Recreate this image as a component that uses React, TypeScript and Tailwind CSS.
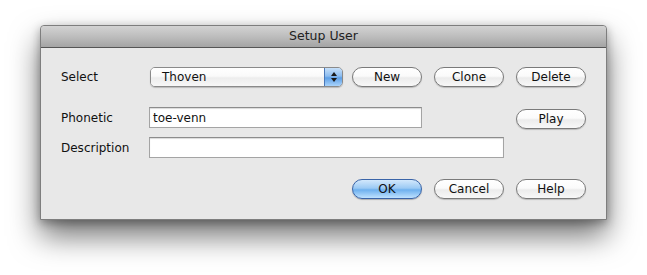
import React from "react";

const font = { fontFamily: '"DejaVu Sans", "Liberation Sans", sans-serif' };

function AquaButton({ label, primary = false }: { label: string; primary?: boolean }) {
  return (
    <button
      className={
        primary
          ? "h-[20px] w-[70px] rounded-full border border-[#3a64a8] bg-[linear-gradient(to_bottom,#d2e8fc_0%,#9ccaf4_45%,#6eb0ee_55%,#bfe2ff_100%)] text-[12px] leading-none text-[#111] shadow-[0_1px_1px_rgba(0,0,0,0.25)]"
          : "h-[20px] w-[70px] rounded-full border border-[#7a7a7a] bg-[linear-gradient(to_bottom,#ffffff_0%,#fbfbfb_45%,#ececec_55%,#f8f8f8_100%)] text-[12px] leading-none text-[#111] shadow-[0_1px_1px_rgba(0,0,0,0.2)]"
      }
    >
      {label}
    </button>
  );
}

function PopUp({ value }: { value: string }) {
  return (
    <div className="flex h-[20px] w-[193px] overflow-hidden rounded-[5px] border border-[#8a8a8a] shadow-[0_1px_1px_rgba(0,0,0,0.2)]">
      <div className="flex flex-1 items-center bg-[linear-gradient(to_bottom,#ffffff_0%,#fafafa_45%,#ededed_55%,#f7f7f7_100%)] pl-[11px] text-[12px] text-[#111]">
        {value}
      </div>
      <div className="flex w-[18px] flex-col items-center justify-center gap-[2px] border-l border-[#4a78b8] bg-[linear-gradient(to_bottom,#c6e0fa_0%,#8cbcef_45%,#5d9fe6_55%,#a9d3fb_100%)]">
        <svg width="6" height="4" viewBox="0 0 6 4">
          <path d="M3 0 L6 4 L0 4 Z" fill="#1a1a1a" />
        </svg>
        <svg width="6" height="4" viewBox="0 0 6 4">
          <path d="M0 0 L6 0 L3 4 Z" fill="#1a1a1a" />
        </svg>
      </div>
    </div>
  );
}

function TextField({ value, width }: { value?: string; width: string }) {
  return (
    <div
      className={`flex h-[21px] ${width} items-center border border-[#a4a4a4] border-t-[#8c8c8c] bg-white pl-[3px] text-[12px] text-[#111] shadow-[inset_0_1px_1px_rgba(0,0,0,0.15)]`}
    >
      {value}
    </div>
  );
}

export default function App() {
  return (
    <div className="h-[275px] w-[647px] overflow-hidden bg-white pt-[25px] pl-[40px]" style={font}>
      <div className="w-[567px] rounded-t-[4px] border border-[#7e7e7e] bg-[#e8e8e8] shadow-[0_16px_30px_rgba(0,0,0,0.55),0_3px_10px_rgba(0,0,0,0.3)]">
        <div className="flex h-[22px] items-center justify-center rounded-t-[4px] border-b border-[#555] bg-[linear-gradient(to_bottom,#d3d3d3_0%,#bdbdbd_50%,#a4a4a4_100%)] text-[12.5px] text-[#222]">
          Setup User
        </div>

        <div className="flex flex-col pt-[19px] pb-[20px] pl-[20px] text-[12px] text-[#111]">
          <div className="flex h-[20px] items-center">
            <span className="w-[89px]">Select</span>
            <PopUp value="Thoven" />
            <div className="ml-[9px] flex gap-[12px]">
              <AquaButton label="New" />
              <AquaButton label="Clone" />
              <AquaButton label="Delete" />
            </div>
          </div>

          <div className="mt-[20px] flex h-[21px] items-center">
            <span className="w-[88px]">Phonetic</span>
            <TextField value="toe-venn" width="w-[273px]" />
            <div className="ml-[94px] mt-[2px]">
              <AquaButton label="Play" />
            </div>
          </div>

          <div className="mt-[9px] flex h-[21px] items-center">
            <span className="w-[88px]">Description</span>
            <TextField width="w-[355px]" />
          </div>

          <div className="mt-[21px] flex h-[20px] justify-end gap-[12px] pr-[20px]">
            <AquaButton label="OK" primary />
            <AquaButton label="Cancel" />
            <AquaButton label="Help" />
          </div>
        </div>
      </div>
    </div>
  );
}
